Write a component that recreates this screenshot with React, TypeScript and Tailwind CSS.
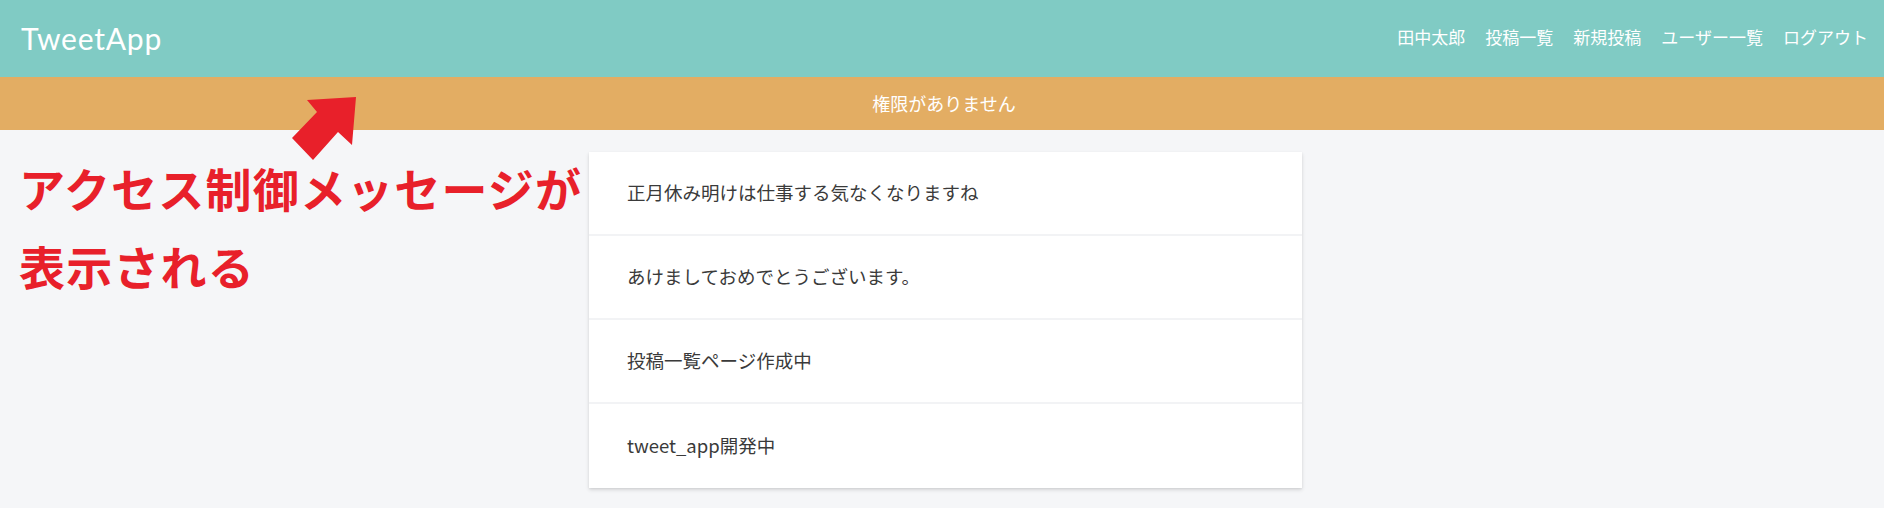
import React from "react";

const posts = [
  "正月休み明けは仕事する気なくなりますね",
  "あけましておめでとうございます。",
  "投稿一覧ページ作成中",
  "tweet_app開発中",
];

const navs = ["田中太郎", "投稿一覧", "新規投稿", "ユーザー一覧", "ログアウト"];

export default function App() {
  return (
    <div
      className="relative min-h-screen bg-[#f5f6f8]"
      style={{ fontFamily: '"Noto Sans CJK JP", "Noto Sans", sans-serif' }}
    >
      <header className="flex h-[77px] items-center justify-between bg-[#80cbc4] pl-[21px] pr-[16px]">
        <div
          className="pb-[2px] text-[30px] font-normal leading-none tracking-[0.8px] text-white"
          style={{ fontFamily: 'Lato, "Noto Sans", sans-serif' }}
        >
          TweetApp
        </div>
        <nav className="flex items-center gap-[20px] pb-[4px] text-[17px] text-white">
          {navs.map((n) => (
            <span key={n}>{n}</span>
          ))}
        </nav>
      </header>

      <div className="flex h-[53px] items-center justify-center bg-[#e3ad63] pl-[4px] text-[18px] text-white">
        権限がありません
      </div>

      <main className="flex justify-center pl-[7px] pt-[22px] pb-[20px]">
        <div className="w-[713px] bg-white shadow-[0_2px_4px_rgba(0,0,0,0.12),0_1px_2px_rgba(0,0,0,0.06)]">
          {posts.map((p, i) => (
            <div
              key={p}
              className={`flex h-[84px] items-center pl-[38px] text-[18.5px] text-[#3a3a3a] ${
                i < posts.length - 1 ? "border-b-2 border-[#f2f3f5]" : ""
              }`}
            >
              {p}
            </div>
          ))}
        </div>
      </main>

      <div className="absolute left-[19px] top-[148px] text-[46px] font-bold leading-[78px] tracking-[1.2px] text-[#e8202a]">
        <div>アクセス制御メッセージが</div>
        <div>表示される</div>
      </div>

      <svg
        className="absolute left-0 top-0"
        width="400"
        height="200"
        viewBox="0 0 400 200"
      >
        <polygon
          points="356,97 352,145 338,132 313,160 292,138 317,112 307,100"
          fill="#e8202a"
        />
      </svg>
    </div>
  );
}
